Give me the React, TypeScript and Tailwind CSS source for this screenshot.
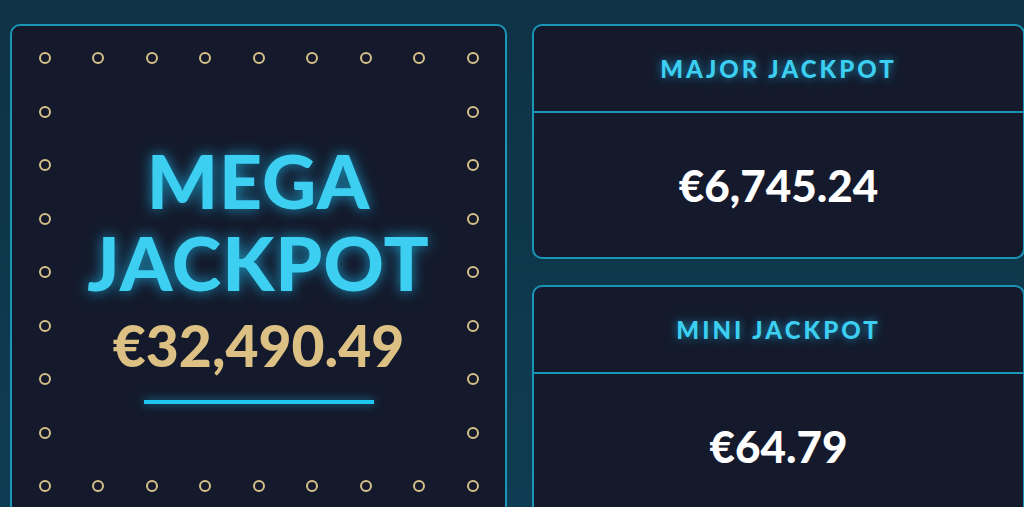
const FONT = { fontFamily: "Lato, 'Open Sans', sans-serif" };

const GRID = 9;

function Dot() {
  return <div className="h-[12px] w-[12px] rounded-full border-2 border-[#d6c08a]" />;
}

function MegaPanel() {
  const cells: { key: string; row: number; col: number }[] = [];
  for (let r = 0; r < GRID; r++) {
    for (let c = 0; c < GRID; c++) {
      if (r === 0 || r === GRID - 1 || c === 0 || c === GRID - 1) {
        cells.push({ key: `${r}-${c}`, row: r + 1, col: c + 1 });
      }
    }
  }

  return (
    <div className="flex h-[496px] w-[497px] shrink-0 items-center justify-center rounded-[10px] border-2 border-[#1996b6] bg-[#141a2c]">
      <div className="grid grid-cols-[repeat(9,53.5px)] grid-rows-[repeat(9,53.5px)]">
        {cells.map((cell) => (
          <div
            key={cell.key}
            className="flex items-center justify-center"
            style={{ gridRow: cell.row, gridColumn: cell.col }}
          >
            <Dot />
          </div>
        ))}
        <div className="col-start-2 col-end-9 row-start-2 row-end-9 flex flex-col items-center justify-center">
          <h1
            className="mt-[-1px] text-center text-[75px] font-black leading-[82px] tracking-[1px] text-[#3ccff2] [text-shadow:0_0_14px_rgba(30,190,240,0.75)]"
            style={FONT}
          >
            MEGA
            <br />
            JACKPOT
          </h1>
          <div
            className="mt-[10px] text-[57px] font-black leading-[64px] text-[#dcc084]"
            style={FONT}
          >
            €32,490.49
          </div>
          <div className="mt-[23px] h-[4px] w-[230px] bg-[#1ec8f2] shadow-[0_0_10px_rgba(30,200,240,0.6)]" />
        </div>
      </div>
    </div>
  );
}

function SmallPanel({ title, amount }: { title: string; amount: string }) {
  return (
    <div className="flex h-[235px] flex-col rounded-[10px] border-2 border-[#1996b6] bg-[#141a2c]">
      <div className="flex h-[87px] items-center justify-center border-b-2 border-[#1996b6]">
        <span
          className="text-[24px] font-black tracking-[3px] text-[#3ccff2] [text-shadow:0_0_10px_rgba(30,190,240,0.7)]"
          style={FONT}
        >
          {title}
        </span>
      </div>
      <div className="flex flex-1 items-center justify-center">
        <span className="text-[44px] font-black text-white" style={FONT}>
          {amount}
        </span>
      </div>
    </div>
  );
}

export default function App() {
  return (
    <div className="h-[507px] w-full overflow-hidden bg-[linear-gradient(180deg,#0e3246_0%,#0f3c52_100%)]">
      <div className="flex gap-[25px] pl-[10px] pt-[24px]">
        <MegaPanel />
        <div className="flex w-[493px] shrink-0 flex-col gap-[26px]">
          <SmallPanel title="MAJOR JACKPOT" amount="€6,745.24" />
          <SmallPanel title="MINI JACKPOT" amount="€64.79" />
        </div>
      </div>
    </div>
  );
}
